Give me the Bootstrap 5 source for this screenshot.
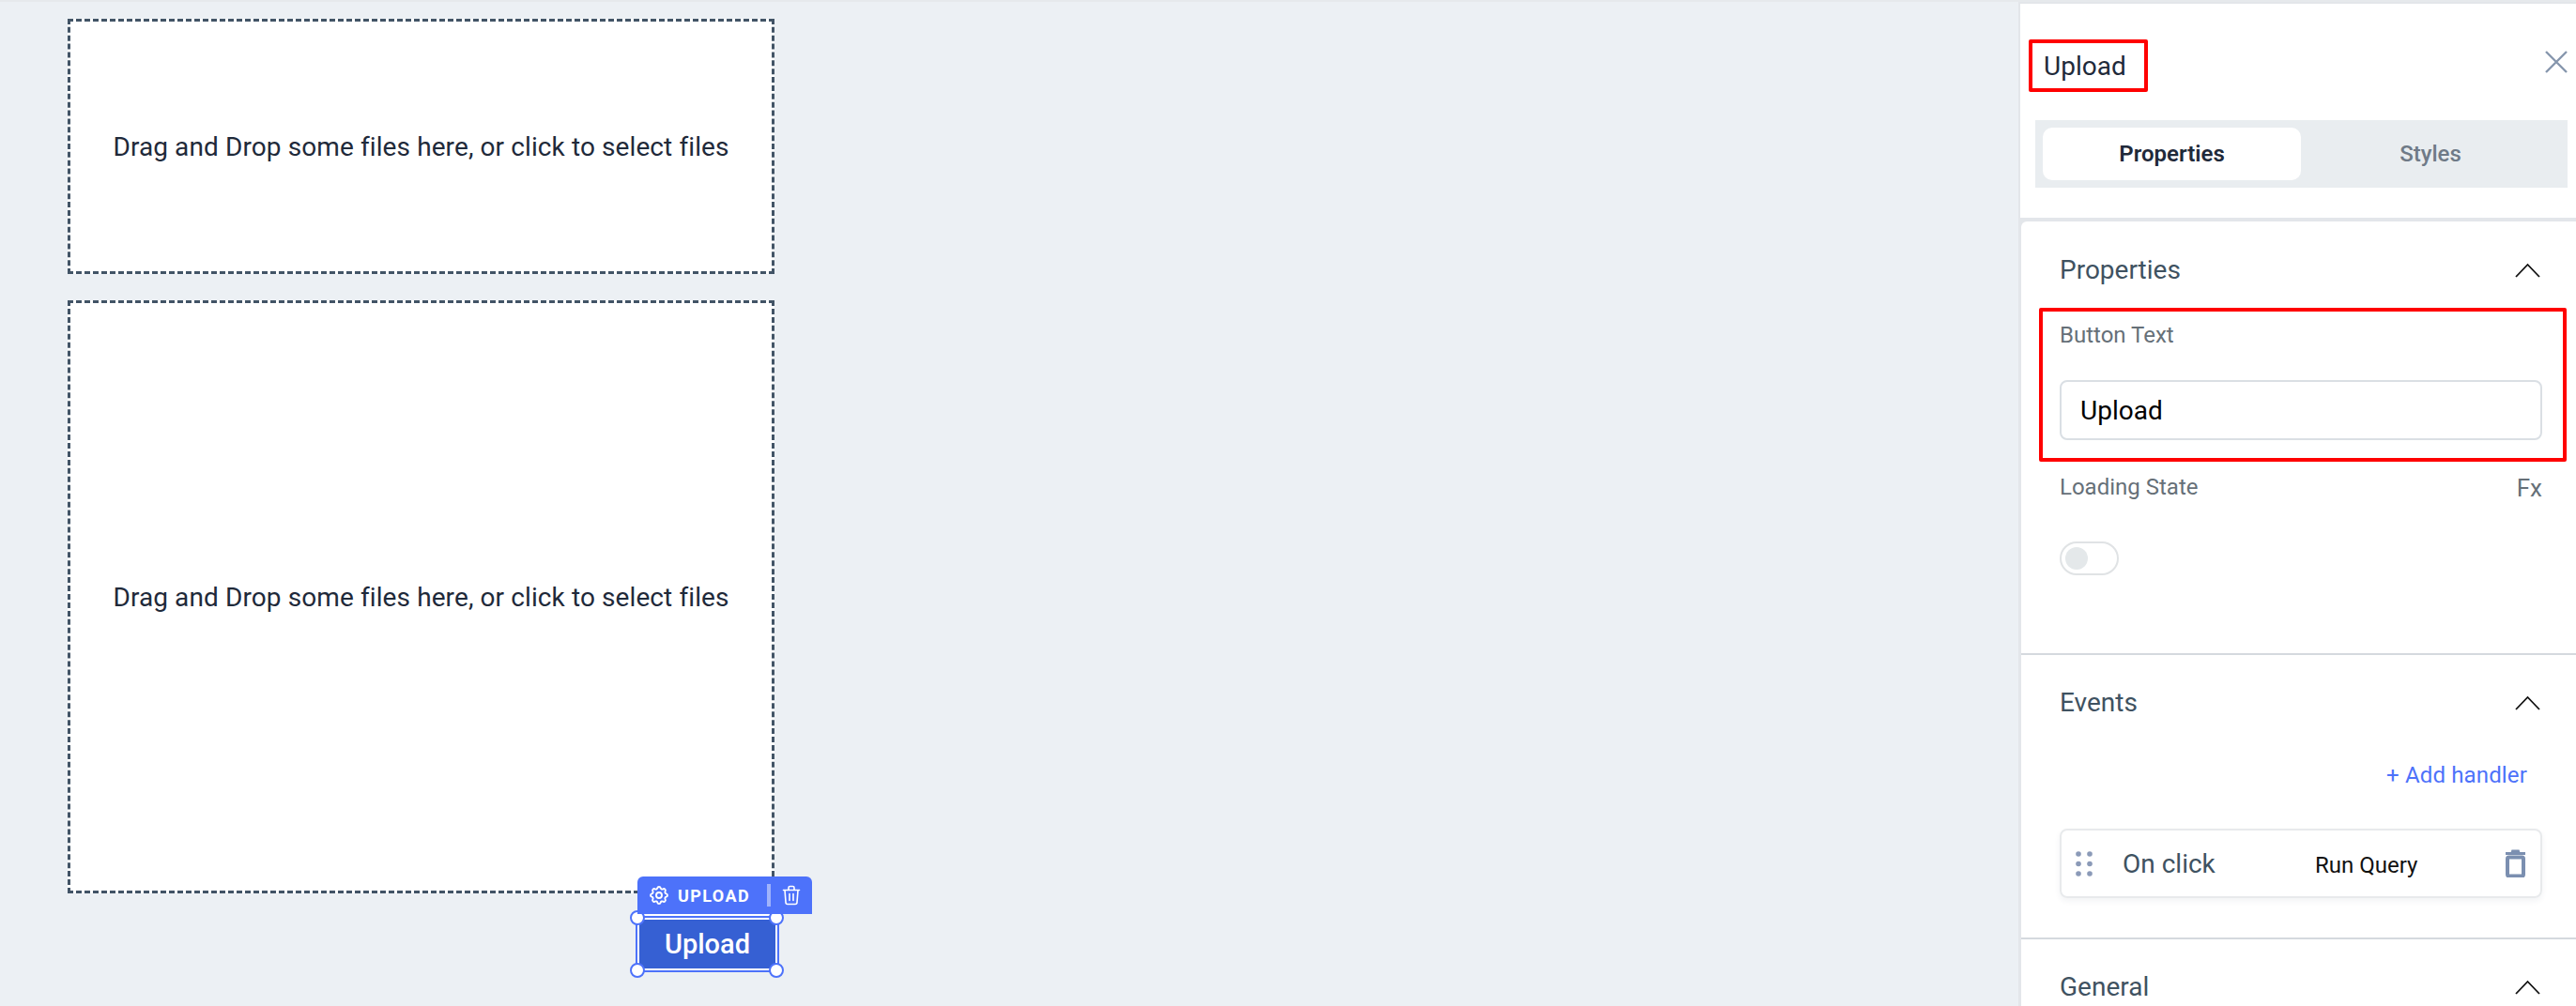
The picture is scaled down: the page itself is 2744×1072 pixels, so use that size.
<!DOCTYPE html>
<html lang="en">
<head>
    <meta charset="UTF-8">
    <meta name="viewport" content="width=device-width, initial-scale=1.0">
    <title>Upload</title>
    <link rel="stylesheet" href="https://cdn.jsdelivr.net/npm/bootstrap@5.3.3/dist/css/bootstrap.min.css">
    <style>
        body { font-family: Roboto, "Liberation Sans", sans-serif; background: #ecf0f4; overflow: hidden; height: 1072px; }
        .page-top { height: 2px; background: #e6e9ec; }
        .app-wrap { height: 1070px; }
        .editor-canvas { position: relative; }
        .dropzone { position: absolute; left: 72px; width: 753px; background: #fff; border: 3px dashed #425466; color: #1f2a3a; font-size: 28px; letter-spacing: .1px; padding-top: 2px; }
        .dropzone-a { top: 18px; height: 272px; }
        .dropzone-b { top: 318px; height: 632px; }

        .widget-bar { position: absolute; left: 679px; top: 932px; width: 186px; height: 40px; background: #4d72fa; border-radius: 6px 6px 0 0; color: #fff; font-size: 18px; font-weight: 700; letter-spacing: 1.4px; }
        .bar-gear { margin-left: 11px; }
        .bar-sep { width: 4px; height: 24px; background: #a0b3fb; }
        .bar-bin { margin: 0 12px; }
        .widget-frame { position: absolute; left: 677px; top: 974px; width: 153px; height: 60px; background: #fff; border: 2px solid #4d72fa; box-shadow: 0 -2px 0 #fff; }
        .upload-btn { position: absolute; left: 2px; top: 2px; width: 145px; height: 52px; padding: 0; border: 0; border-radius: 0; background: #3660d3; color: #fff; font-size: 29px; font-weight: 500; line-height: 52px; }
        .grip { position: absolute; width: 16px; height: 16px; background: #fff; border: 2.5px solid #4d72fa; border-radius: 50%; }
        .grip-tl { left: -8px; top: -8px; }
        .grip-tr { right: -7px; top: -8px; }
        .grip-bl { left: -8px; bottom: -8px; }
        .grip-br { right: -7px; bottom: -8px; }

        .side-panel { width: 594px; height: 1070px; flex: none; background: #e3e6ea; border-left: 2px solid #e3e6ea; border-top: 2px solid #e3e6ea; overflow: hidden; }
        .panel-head { height: 232px; background: #fff; border-bottom: 4px solid #e3e6ea; padding: 38px 9px 0 9px; }
        .mark-red { border: 4px solid #f00; border-radius: 2px; }
        .title-mark { width: 127px; height: 56px; padding-left: 12px; font-size: 28px; color: #1f2a3a; line-height: 49px; }
        .close-x { margin-top: 12px; }
        .panel-tabs { margin: 30px 0 0 7px; height: 72px; background: #e9edf0; padding: 8px; }
        .tab-on, .tab-off { width: 275px; height: 56px; font-size: 24px; padding: 1px 0 0; border: 0; line-height: 55px; }
        .tab-on { background: #fff; border-radius: 10px; color: #1f2a3a; font-weight: 600; }
        .tab-off { color: #6f7a87; font-weight: 500; flex-grow: 1; }

        .panel-part { margin-left: 1px; background: #fff; padding: 0 36px 0 41px; border-bottom: 2px solid #d5d9de; }
        .part-head { color: #3f5261; font-size: 28px; padding-top: 30px; }
        .part-chev { margin: 13px 2px 0 0; }
        .field-label { color: #667078; font-size: 24px; }
        .fx-mark { font-size: 26px; }
        .part-a { height: 462px; border-top-left-radius: 6px; }
        .part-a .part-head { height: 92px; padding-top: 31px; }
        .field-mark { margin: 0 -26px 0 -22px; height: 164px; padding: 7px 22px 0 18px; }
        .field-input { height: 64px; margin-top: 30px; border: 2px solid #dadfe4; border-radius: 8px; font-size: 28px; color: #000; padding: 0 20px; box-shadow: none; }
        .state-row { margin-top: 9px; height: 34px; }
        .switch-mark { width: 63px; height: 36px; margin: 42px 0 0 0; border: 2px solid #e0e3e5; border-radius: 18px; padding: 4px; }
        .switch-knob { width: 24px; height: 24px; background: #e4e8ea; border-radius: 50%; }

        .part-b { height: 303px; }
        .part-b .part-head { height: 111px; }
        .add-link { color: #4d72fa; font-size: 24px; letter-spacing: .15px; text-decoration: none; margin-right: 16px; line-height: 34px; }
        .handler-row { height: 74px; margin-top: 40px; border: 2px solid #e8eaec; border-radius: 8px; box-shadow: 0 3px 6px rgba(30, 50, 80, .06); }
        .handler-grip { margin-left: 15px; }
        .handler-name { color: #3f5261; font-size: 28px; margin-left: 32px; width: 205px; padding-top: 1px; }
        .handler-query { color: #111; font-size: 24px; margin-top: 3px; }
        .handler-bin { margin-right: 16px; }
        .part-c { height: 80px; border-bottom: 0; }
    </style>
</head>
<body>
<div class="page-top"></div>
<div class="app-wrap d-flex">
    <div class="editor-canvas flex-grow-1">
        <div class="dropzone dropzone-a d-flex align-items-center justify-content-center">Drag and Drop some files here, or click to select files</div>
        <div class="dropzone dropzone-b d-flex align-items-center justify-content-center">Drag and Drop some files here, or click to select files</div>

        <div class="widget-frame">
            <button class="btn upload-btn" type="button">Upload</button>
            <span class="grip grip-tl"></span>
            <span class="grip grip-tr"></span>
            <span class="grip grip-bl"></span>
            <span class="grip grip-br"></span>
        </div>
        <div class="widget-bar d-flex align-items-center">
            <svg class="bar-gear" width="24" height="24" viewBox="0 0 24 24" fill="none" stroke="#fff" stroke-width="1.9" stroke-linecap="round" stroke-linejoin="round"><path d="M10.325 4.317c.426 -1.756 2.924 -1.756 3.35 0a1.724 1.724 0 0 0 2.573 1.066c1.543 -.94 3.31 .826 2.37 2.37a1.724 1.724 0 0 0 1.065 2.572c1.756 .426 1.756 2.924 0 3.35a1.724 1.724 0 0 0 -1.066 2.573c.94 1.543 -.826 3.31 -2.37 2.37a1.724 1.724 0 0 0 -2.572 1.065c-.426 1.756 -2.924 1.756 -3.35 0a1.724 1.724 0 0 0 -2.573 -1.066c-1.543 .94 -3.31 -.826 -2.37 -2.37a1.724 1.724 0 0 0 -1.065 -2.572c-1.756 -.426 -1.756 -2.924 0 -3.35a1.724 1.724 0 0 0 1.066 -2.573c-.94 -1.543 .826 -3.31 2.37 -2.37c1 .608 2.296 .07 2.572 -1.065z"/><circle cx="12" cy="12" r="3"/></svg>
            <span class="ms-2 flex-grow-1">UPLOAD</span>
            <span class="bar-sep"></span>
            <svg class="bar-bin" width="20" height="22" viewBox="0 0 20 22" fill="none" stroke="#fff" stroke-width="1.6" stroke-linecap="round" stroke-linejoin="round"><path d="M1.5 5.5h17M7 5.5V3a1.5 1.5 0 0 1 1.5-1.5h3A1.5 1.5 0 0 1 13 3v2.5M3 5.5l1 13a2 2 0 0 0 2 2h8a2 2 0 0 0 2-2l1-13M8 9.5v7M12 9.5v7"/></svg>
        </div>
    </div>

    <div class="side-panel">
        <div class="panel-head">
            <div class="d-flex justify-content-between">
                <div class="mark-red title-mark">Upload</div>
                <svg class="close-x" width="24" height="24" viewBox="0 0 24 24" fill="none" stroke="#8696ad" stroke-width="2.4"><path d="M1 1l22 22M23 1L1 23"/></svg>
            </div>
            <div class="panel-tabs d-flex">
                <button class="btn tab-on" type="button">Properties</button>
                <button class="btn tab-off" type="button">Styles</button>
            </div>
        </div>

        <div class="panel-part part-a">
            <div class="part-head d-flex justify-content-between">
                <span>Properties</span>
                <svg class="part-chev" width="27" height="16" viewBox="0 0 27 16" fill="none" stroke="#111" stroke-width="1.8"><path d="M1 15L13.5 2 26 15"/></svg>
            </div>
            <div class="mark-red field-mark">
                <div class="field-label">Button Text</div>
                <input class="form-control field-input" type="text" value="Upload">
            </div>
            <div class="state-row d-flex justify-content-between field-label">
                <span>Loading State</span>
                <span class="fx-mark">Fx</span>
            </div>
            <div class="switch-mark"><div class="switch-knob"></div></div>
        </div>

        <div class="panel-part part-b">
            <div class="part-head d-flex justify-content-between">
                <span>Events</span>
                <svg class="part-chev" width="27" height="16" viewBox="0 0 27 16" fill="none" stroke="#111" stroke-width="1.8"><path d="M1 15L13.5 2 26 15"/></svg>
            </div>
            <div class="d-flex justify-content-end"><a class="add-link" href="#">+ Add handler</a></div>
            <div class="handler-row d-flex align-items-center">
                <svg class="handler-grip" width="18" height="27" viewBox="0 0 18 27" fill="#8b9ab8"><circle cx="3" cy="3" r="2.8"/><circle cx="15" cy="3" r="2.8"/><circle cx="3" cy="13.5" r="2.8"/><circle cx="15" cy="13.5" r="2.8"/><circle cx="3" cy="24" r="2.8"/><circle cx="15" cy="24" r="2.8"/></svg>
                <span class="handler-name">On click</span>
                <span class="handler-query flex-grow-1">Run Query</span>
                <svg class="handler-bin" width="21" height="30" viewBox="0 0 21 30" fill="none"><path d="M0 3h21v3H0zM6.5 .5h8l1 3h-10z" fill="#7b8fb0"/><rect x="2" y="8.5" width="17" height="20" rx="1.5" stroke="#7b8fb0" stroke-width="4"/></svg>
            </div>
        </div>

        <div class="panel-part part-c">
            <div class="part-head d-flex justify-content-between">
                <span>General</span>
                <svg class="part-chev" width="27" height="16" viewBox="0 0 27 16" fill="none" stroke="#111" stroke-width="1.8"><path d="M1 15L13.5 2 26 15"/></svg>
            </div>
        </div>
    </div>
</div>
<script src="https://cdn.jsdelivr.net/npm/bootstrap@5.3.3/dist/js/bootstrap.bundle.min.js"></script>
</body>
</html>
